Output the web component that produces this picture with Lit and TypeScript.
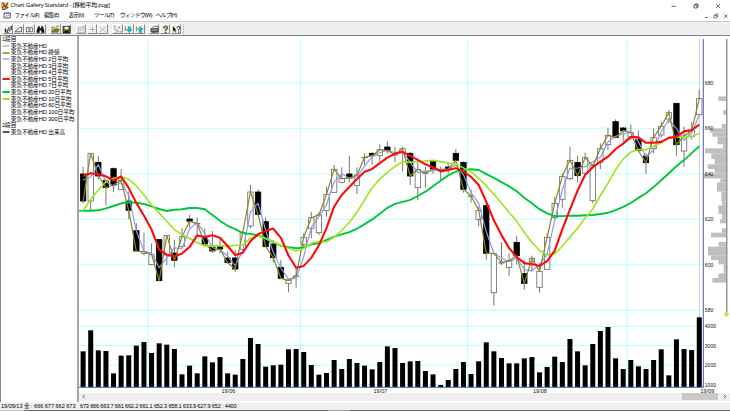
import { LitElement, html, svg, css } from "lit";
import { customElement } from "lit/decorators.js";

type Candle = [kind: "w" | "b", top: number, bottom: number, high: number, low: number];

/** Converts a block of rows measured in thirds of a pixel to panel coordinates. */
const block = (originY: number, rows: Candle[]): Candle[] =>
  rows.map(([k, ...v]) => [k, ...v.map((n) => originY + n / 3)] as Candle);

const candles: Candle[] = [
  ...block(140, [
    ["b", 102, 183, 80, 190], ["w", 40, 183, 40, 210], ["b", 67, 108, 47, 118], ["b", 121, 143, 120, 197],
    ["b", 86, 135, 82, 155], ["w", 121, 148, 87, 148], ["b", 183, 211, 155, 238], ["b", 272, 333, 250, 333],
    ["w", 335, 340, 278, 346], ["w", 344, 374, 310, 375], ["b", 299, 422, 299, 422], ["w", 286, 345, 286, 375],
    ["b", 339, 361, 300, 381], ["w", 290, 320, 265, 322], ["b", 237, 244, 224, 262], ["w", 250, 250, 232, 290],
  ]),
  ...block(170, [
    ["b", 203, 222, 175, 228], ["b", 231, 243, 183, 248], ["b", 229, 237, 205, 250], ["b", 264, 278, 245, 280],
    ["b", 264, 297, 240, 305], ["w", 187, 238, 185, 245], ["w", 66, 168, 45, 175], ["b", 66, 133, 58, 137],
    ["b", 155, 230, 142, 230], ["b", 222, 263, 210, 278], ["b", 292, 325, 270, 325], ["w", 331, 340, 325, 367],
    ["w", 318, 318, 293, 353], ["w", 202, 223, 190, 235], ["w", 143, 175, 126, 205], ["w", 135, 188, 128, 195],
    ["w", 73, 122, 50, 140],
  ]),
  ...block(130, [
    ["w", 118, 187, 105, 187], ["w", 146, 157, 112, 160], ["b", 132, 144, 77, 157], ["w", 135, 166, 112, 192],
    ["w", 82, 82, 70, 105], ["b", 70, 77, 67, 103], ["w", 59, 77, 43, 95], ["b", 51, 62, 35, 70],
    ["w", 74, 74, 50, 97], ["w", 56, 68, 50, 125], ["b", 70, 138, 65, 165], ["w", 118, 173, 85, 211],
    ["w", 129, 129, 110, 173], ["b", 93, 117, 90, 132], ["w", 119, 119, 110, 150], ["b", 111, 117, 100, 130],
    ["b", 70, 91, 57, 97], ["b", 97, 178, 95, 188],
  ]),
  ...block(140, [
    ["w", 168, 168, 148, 188], ["w", 211, 238, 200, 258], ["b", 197, 340, 190, 360], ["w", 340, 458, 340, 497],
    ["w", 368, 368, 307, 375], ["w", 362, 382, 340, 407], ["b", 307, 347, 287, 373], ["b", 401, 430, 360, 449],
    ["w", 355, 365, 347, 395], ["w", 394, 442, 370, 458], ["w", 292, 388, 280, 388], ["w", 190, 233, 170, 237],
  ]),
  ...block(85, [
    ["w", 274, 343, 265, 368], ["w", 226, 281, 185, 286], ["b", 232, 272, 212, 293], ["w", 218, 265, 203, 268],
    ["w", 243, 347, 237, 355], ["w", 191, 232, 175, 252], ["w", 151, 179, 128, 195], ["b", 110, 157, 103, 160],
    ["b", 129, 137, 125, 170], ["w", 143, 156, 118, 165], ["b", 163, 197, 137, 200], ["b", 213, 233, 205, 266],
    ["w", 157, 191, 130, 205], ["w", 124, 150, 110, 158], ["w", 83, 102, 75, 115], ["b", 55, 179, 55, 212],
    ["w", 153, 198, 125, 246], ["w", 137, 155, 110, 163], ["w", 41, 89, 15, 92],
  ]),
];

const volumeTops = [
  139, 76, 136, 138, 205, 152, 151, 122, 111, 144, 115, 119, 132, 208, 182, 205, 154, 172, 156, 205, 209, 162, 99,
  117, 185, 181, 179, 133, 132, 141, 180, 209, 204, 165, 192, 162, 174, 182, 193, 171, 124, 129, 174, 169, 168, 198,
  208, 240, 225, 192, 171, 207, 169, 112, 139, 159, 175, 175, 160, 156, 202, 186, 155, 171, 102, 139, 181, 117, 78,
  66, 160, 192, 165, 184, 192, 165, 133, 211, 103, 132, 135, 37,
].map((v) => 305 + v / 3);

const xAt = (i: number) => 83.1 + i * 7.607;
const closes = candles.map(([k, t, b]) => (k === "w" ? t : b));

/** Moving average; `seed` supplies the points whose window starts before the visible range. */
const average = (days: number, seed: number[]) =>
  closes.map((_, i) =>
    i < seed.length ? seed[i] : closes.slice(i - days + 1, i + 1).reduce((a, b) => a + b, 0) / days,
  );

const seedRow = (values: number[]) => values.map((v) => 140 + v / 3);

const line = (ys: number[], color: string, width: number) =>
  svg`<polyline points=${ys.map((y, i) => `${xAt(i).toFixed(1)},${y.toFixed(1)}`).join(" ")}
    fill="none" stroke=${color} stroke-width=${width} stroke-linejoin="round"></polyline>`;

/** Volume-by-price profile: left edge, top, bottom. */
const profile = [
  ...[
    [475, 34, 48], [490, 75, 89], [485, 117, 130], [450, 130, 143], [457, 143, 155], [473, 155, 178],
    [489, 178, 190], [435, 190, 205], [454, 205, 222], [464, 222, 238], [443, 238, 252], [464, 252, 266],
    [432, 266, 280], [481, 280, 292], [471, 292, 320],
  ].map(([x, a, b]) => [560 + x / 3, 85 + a / 3, 85 + b / 3]),
  ...[
    [124, 5, 35], [126, 35, 46], [115, 46, 72], [126, 72, 88], [120, 88, 100], [126, 115, 128], [93, 128, 142],
    [116, 156, 170], [84, 170, 196], [93, 196, 210], [115, 210, 223], [131, 223, 250], [115, 250, 264],
    [97, 264, 278],
  ].map(([x, a, b]) => [680 + x / 3, 190 + a / 3, 190 + b / 3]),
];

const prices: [string, number][] = [
  ["680", 82.8], ["660", 128.3], ["640", 173.8], ["620", 219.3], ["600", 264.8], ["580", 310.3],
];
const volumes: [string, number][] = [["4000", 326.2], ["3000", 345.5], ["2000", 365.2], ["1000", 384.5]];
const months: [string, number][] = [["19/06", 221.5], ["19/07", 373.5], ["19/08", 533], ["19/09", 700.5]];

const legend: [string, string, number][] = [
  ["東急不動産HD", "#909090", 1.2],
  ["東急不動産HD 終値", "#8f8a1c", 1.5],
  ["東急不動産HD 2日平均", "#a4a4ff", 1.6],
  ["東急不動産HD 3日平均", "", 0],
  ["東急不動産HD 4日平均", "", 0],
  ["東急不動産HD 5日平均", "#ff1010", 2.2],
  ["東急不動産HD 7日平均", "", 0],
  ["東急不動産HD 20日平均", "#00c63c", 2.1],
  ["東急不動産HD 10日平均", "#9be61e", 1.9],
  ["東急不動産HD 60日平均", "", 0],
  ["東急不動産HD 100日平均", "", 0],
  ["東急不動産HD 300日平均", "", 0],
];

const icons = {
  candles: svg`<path d="M1.5 4v4M3.5 5v3.5M5.5 2.5v4M8 1v4.5" stroke="#111" stroke-width="1.2"/><path d="M1 8.5h4L9 4" stroke="#555" stroke-width=".6" fill="none"/>`,
  slope: svg`<path d="M1 7.5L6.5 2.5H8.5V7.5Z" stroke="#333" stroke-width=".8" fill="none"/>`,
  panes: svg`<path d="M1.5 3h3v4.5h-3zM5.5 3h3v4.5h-3z" stroke="#444" stroke-width=".8" fill="#fff"/>`,
  find: svg`<path d="M2.5 1.5h1.7v2h1.6v-2h1.7L9.2 6v2.5H6V6H4v2.5H.8V6Z" fill="#111"/>`,
  open: svg`<path d="M1 8V2.5h2.5l1 1H7.5V5" fill="#ffe94a" stroke="#333" stroke-width=".6"/><path d="M1 8l2-3.2h6.3L7.5 8Z" fill="#8a8a10" stroke="#222" stroke-width=".5"/><path d="M6 1.8c1-1 2-.6 2.7.5" fill="none" stroke="#111" stroke-width=".6"/>`,
  save: svg`<path d="M1.2 1.5h7.6v7.2H1.2Z" fill="#77780a" stroke="#111" stroke-width=".9"/><path d="M3 1.9h4v2.8H3z" fill="#f2f2f2"/><path d="M2.8 6.2h4.6v2.4H2.8z" fill="#111"/>`,
  props: svg`<path d="M1 3h6v5.5H1zM2 4.5h3M2 6h3M5 3l1.5-1.7H9V4L7.5 5.5" fill="none" stroke="#aaa" stroke-width=".8"/>`,
  plus: svg`<path d="M5 2v6M2 5h6" stroke="#a6a6a6" stroke-width=".9"/>`,
  cross: svg`<path d="M2.2 2.2l5.6 5.6M7.8 2.2L2.2 7.8" stroke="#a6a6a6" stroke-width=".9"/>`,
  trend: svg`<path d="M2 1v1.5M2 4v1M4 5v1M5 7h1.2M3 8h1M7 2v1.5" stroke="#333" stroke-width="1"/><path d="M8.8 6v2H7" stroke="#2aa" stroke-width=".7" fill="none"/>`,
  down: svg`<path d="M1.6 1.5v5M.8 5.5h1.6" stroke="#555" stroke-width=".7"/><path d="M4.7 2h2.6v3H9L6 8.6 3 5h1.7Z" fill="#14c3cc" stroke="#066" stroke-width=".4"/>`,
  up: svg`<path d="M1.6 2v5M.8 3h1.6" stroke="#555" stroke-width=".7"/><path d="M4.7 8.4h2.6V5H9L6 1.6 3 5h1.7Z" fill="#14c3cc" stroke="#066" stroke-width=".4"/>`,
  print: svg`<path d="M3 4l1-2.5h4.2L7.5 4" fill="#fff" stroke="#222" stroke-width=".6"/><path d="M1 4h8v3.5H1z" fill="#8b8b8b" stroke="#111" stroke-width=".7"/><path d="M2 7h5.5v1.5H2z" fill="#444"/>`,
  help: svg`<path d="M3.2 3.6C3 .9 7.2.9 7 3.4 6.8 4.7 5.1 4.6 5.1 6.3" fill="none" stroke="#333" stroke-width="1.9"/><path d="M3.2 3.6C3 .9 7.2.9 7 3.4 6.8 4.7 5.1 4.6 5.1 6.3" fill="none" stroke="#b5b010" stroke-width="1"/><circle cx="5.1" cy="8.2" r=".9" fill="#333"/>`,
  context: svg`<path d="M1 1.2v6l1.4-1.3L3.4 8.2l.9-.4-1-2.1H5Z" fill="#111"/><path d="M5.6 3.2c0-2.2 3.3-2 3.1 0C8.6 4.5 7.2 4.5 7.2 6" fill="none" stroke="#111" stroke-width="1.1"/><circle cx="7.2" cy="7.8" r=".7" fill="#111"/>`,
};

const toolGroups: (keyof typeof icons)[][] = [
  ["candles", "slope", "panes", "find"],
  ["open", "save"],
  ["props", "plus", "cross"],
  ["trend", "down", "up"],
  ["print", "help", "context"],
];

@customElement("stock-chart")
class StockChart extends LitElement {
  static styles = css`
    :host { display: block; width: 651px; height: 357px; background: #fff; }
    svg { display: block; width: 651px; height: 357px; }
    text { font-family: "Liberation Sans", Arial, sans-serif; font-size: 6px; fill: #111; }
  `;
  render() {
    return html`<svg viewBox="79 36 651 357">
      <g stroke="#bdffff" stroke-width="1.1">
        ${[...prices, ...volumes].map(([, y]) => svg`<path d="M79 ${y}H703"></path>`)}
        ${[148, 300.5, 467.5, 627.2].map((x) => svg`<path d="M${x} 39V387"></path>`)}
      </g>
      <path d="M699.3 39V318" stroke="#c8c8c8" stroke-width=".9"></path>
      ${volumeTops.map((y, i) => svg`<rect x=${xAt(i) - 2.5} y=${y} width="5" height=${387 - y} fill="#000"></rect>`)}
      ${candles.map(([k, t, b, h, l], i) => {
        const x = xAt(i);
        return svg`<path d="M${x} ${h}V${l}" stroke="#555" stroke-width=".8"></path>
          <rect x=${x - 2.7} y=${t} width="5.4" height=${Math.max(b - t, 0.4)} fill=${k === "w" ? "#fff" : "#000"}
            stroke=${k === "w" ? "#666" : "#000"} stroke-width=".8"></rect>`;
      })}
      ${line(average(2, seedRow([120])), "#9494f6", 1.2)}
      ${line(closes, "#8c8820", 1.2)}
      ${line(average(20, seedRow([212, 212, 211, 205, 198, 190, 187, 188, 192, 199, 207, 213, 209, 208, 204, 204, 208, 225, 242])), "#00c63c", 1.9)}
      ${line(average(10, seedRow([212, 178, 150, 125, 115, 110, 118, 137, 165])), "#9be61e", 1.6)}
      ${line(average(5, seedRow([107, 100, 103, 109])), "#ff0a0a", 2.1)}
      <path d="M79 210.7H83.2" stroke="#00c63c" stroke-width="1.6"></path>
      <path d="M703.3 39V387.3M79 387.3H703.7" stroke="#5555bb" stroke-width="1"></path>
      ${profile.map(([x, a, b]) => svg`<path d="M${x} ${a}H726.3V${b}H${x}Z" fill="#bfbfbf"></path>`)}
      <path d="M726.8 39V312" stroke="#808080" stroke-width="1.2"></path>
      <path d="M726.5 312l2.1 2.3-2.1 2.3-2.1-2.3z" fill="#f2f200" stroke="#888820" stroke-width=".5"></path>
      ${prices.map(([t, y]) => svg`<text x="704.8" y=${y + 2} textLength="8.5" lengthAdjust="spacingAndGlyphs">${t}</text>`)}
      ${volumes.map(([t, y]) => svg`<text x="704.8" y=${y + 2} textLength="11.3" lengthAdjust="spacingAndGlyphs">${t}</text>`)}
      ${months.map(([t, x]) => svg`<text x=${x} y="392.5" textLength="13.8" lengthAdjust="spacingAndGlyphs">${t}</text>`)}
    </svg>`;
  }
}

@customElement("app-root")
class AppRoot extends LitElement {
  static styles = css`
    :host {
      display: flex; flex-direction: column; width: 730px; height: 411px; overflow: hidden;
      background: #fff; color: #222; font-family: "Noto Sans", "Noto Sans CJK JP", sans-serif;
    }
    * { box-sizing: border-box; }
    svg { display: block; }
    .title { height: 11px; flex: none; display: flex; align-items: center; padding: 0 9px 0 1px; }
    .caption { font: 5.9px/11px "Open Sans", "Noto Sans CJK JP", sans-serif; letter-spacing: -.22px; margin-left: 1.5px; white-space: nowrap; width: 102px; color: #000; }
    .window { margin-left: auto; display: flex; gap: 16.2px; }
    .menu { height: 9.5px; flex: none; display: flex; align-items: center; padding: 0 1.5px 0 3px; font: 5.6px/9px "Noto Sans", "Noto Sans CJK JP", sans-serif; letter-spacing: -.6px; white-space: nowrap; color: #000; }
    .menu .doc { margin-right: 3.5px; }
    .item { flex: none; }
    .child { margin-left: auto; display: flex; gap: 3.3px; }
    .tools { height: 15px; flex: none; display: flex; gap: 4.2px; padding: 2px 0 0 2.5px; background: #efefef; border-top: 1px solid #c9c9c9; border-bottom: 1px solid #858585; }
    .group { display: flex; gap: .3px; }
    .tool { width: 10.6px; height: 10.8px; border: 1px solid; border-color: #fff #8c8c8c #8c8c8c #fff; display: grid; place-items: center; }
    .bar-end { border-left: 1px solid #ccc; margin-left: -2px; height: 11px; }
    .main { flex: 1; min-height: 0; display: flex; }
    .legend { width: 77px; flex: none; border-left: 1px solid #888; padding-top: .4px; font: 5.7px/6.67px "Liberation Sans", "Noto Sans CJK JP", sans-serif; letter-spacing: -.08px; color: #000; white-space: nowrap; }
    .row { height: 6.67px; display: flex; align-items: center; }
    .head { padding-left: 1px; }
    .swatch { width: 8.5px; margin: 0 0 0 1.2px; flex: none; }
    .chart { width: 653px; flex: none; border-left: 2px solid #a6a6a6; display: flex; flex-direction: column; }
    .scroll { height: 8px; flex: none; background: #efefef; display: flex; align-items: center; padding: 0 3px; }
    .thumb { width: 36px; height: 6.5px; background: #c9c9c9; margin: 0 5px 0 auto; }
    .status { height: 8px; flex: none; background: #efefef; border-top: 1px solid #f8f8f8; display: flex; padding-left: 1px; font: 5.6px/7px "Liberation Sans", "Noto Sans CJK JP", sans-serif; white-space: pre; color: #000; }
    .left { width: 79px; letter-spacing: -.04px; }
    .values { letter-spacing: -.18px; }
    .edge { height: 1.5px; flex: none; background: #6c6c6c; display: flex; }
    .lit { width: 22px; height: 1.5px; }
    .lit.first { background: #c5c5c5; width: 24px; }
    .lit.second { background: #999; margin-left: 304px; }
  `;

  render() {
    return html`
      <div class="title">
        <svg width="8" height="8" viewBox="0 0 8 8">
          <path d="M.5 1h6.7v6H.5z" fill="#ecb03a" /><path d="M1 6l2-3 1.5 2L7 .6" stroke="#9c2a1c" stroke-width="1.1" fill="none" />
          <path d="M.5 1h3M5 4v3.5M1 7.4h3" stroke="#413454" stroke-width="1" /><path d="M5.5 5.5h2" stroke="#2e60b5" />
        </svg>
        <span class="caption">Chart Gallery Standard - [移動平均.pqg]</span>
        <div class="window">
          <svg width="6" height="6"><path d="M.5 3.3h4.5" stroke="#333" stroke-width=".7" /></svg>
          <svg width="6" height="6"><path d="M1 2h3v3H1zM2 2V1h3v3H4" fill="none" stroke="#222" stroke-width=".7" /></svg>
          <svg width="6" height="6"><path d="M1 1l4 4M5 1L1 5" stroke="#222" stroke-width=".6" /></svg>
        </div>
      </div>
      <div class="menu">
        <svg class="doc" width="8" height="7"><path d="M1 1h6.3v5H1z" fill="#fff" stroke="#56407c" stroke-width=".9" /><path d="M1 1.3h6.3" stroke="#5577c0" /><path d="M2 4.8l1.5-1.5 1 1L6.5 3" stroke="#a44" stroke-width=".8" fill="none" /></svg>
        ${[["ファイル(F)", 29.5], ["編集(E)", 24.7], ["表示(V)", 25.3], ["ツール(T)", 26], ["ウィンドウ(W)", 35.8], ["ヘルプ(H)", 24]].map(
          ([t, w]) => html`<span class="item" style="width:${w}px">${t}</span>`,
        )}
        <div class="child">
          <svg width="6" height="6"><path d="M1 4.5h3" stroke="#456" stroke-width=".8" /></svg>
          <svg width="6" height="6"><path d="M1 2.5h2.8v2.3H1zM2.3 2.5V1h2.7v2.4H4" fill="none" stroke="#456" stroke-width=".7" /></svg>
          <svg width="6" height="6"><path d="M1.3 1.6l3 3M4.3 1.6l-3 3" stroke="#357" stroke-width=".9" /></svg>
        </div>
      </div>
      <div class="tools">
        ${toolGroups.map(
          (g) => html`<div class="group">${g.map((n) => html`<span class="tool"><svg width="9" height="9" viewBox="0 0 10 10">${icons[n]}</svg></span>`)}</div>`,
        )}
        <div class="bar-end"></div>
      </div>
      <div class="main">
        <div class="legend">
          <div class="row head">1段目</div>
          ${legend.map(([t, c, w]) => this.legendRow(t, c, w))}
          <div class="row head">2段目</div>
          ${this.legendRow("東急不動産HD 出来高", "#222", 1.3)}
        </div>
        <div class="chart">
          <stock-chart></stock-chart>
          <div class="scroll">
            <svg width="4" height="5"><path d="M2.7 .8L1 2.5l1.7 1.7" fill="none" stroke="#444" stroke-width=".9" /></svg>
            <div class="thumb"></div>
            <svg width="4" height="5"><path d="M1 .8l1.7 1.7L1 4.2" fill="none" stroke="#444" stroke-width=".9" /></svg>
          </div>
        </div>
      </div>
      <div class="status">
        <span class="left">19/09/13 金 : 666 677 662 673</span>
        <span class="values">673 666 663.7 661 662.2 661.1 652.3 658.1 633.9 627.9 652 : 4400</span>
      </div>
      <div class="edge"><div class="lit first"></div><div class="lit second"></div></div>
    `;
  }

  private legendRow(text: string, color: string, width: number) {
    return html`<div class="row">
      <svg class="swatch" width="8.5" height="4"><path d="M1.2 2H7" stroke=${color || "none"} stroke-width=${width} stroke-linecap="round"></path></svg>
      <span>${text}</span>
    </div>`;
  }
}
